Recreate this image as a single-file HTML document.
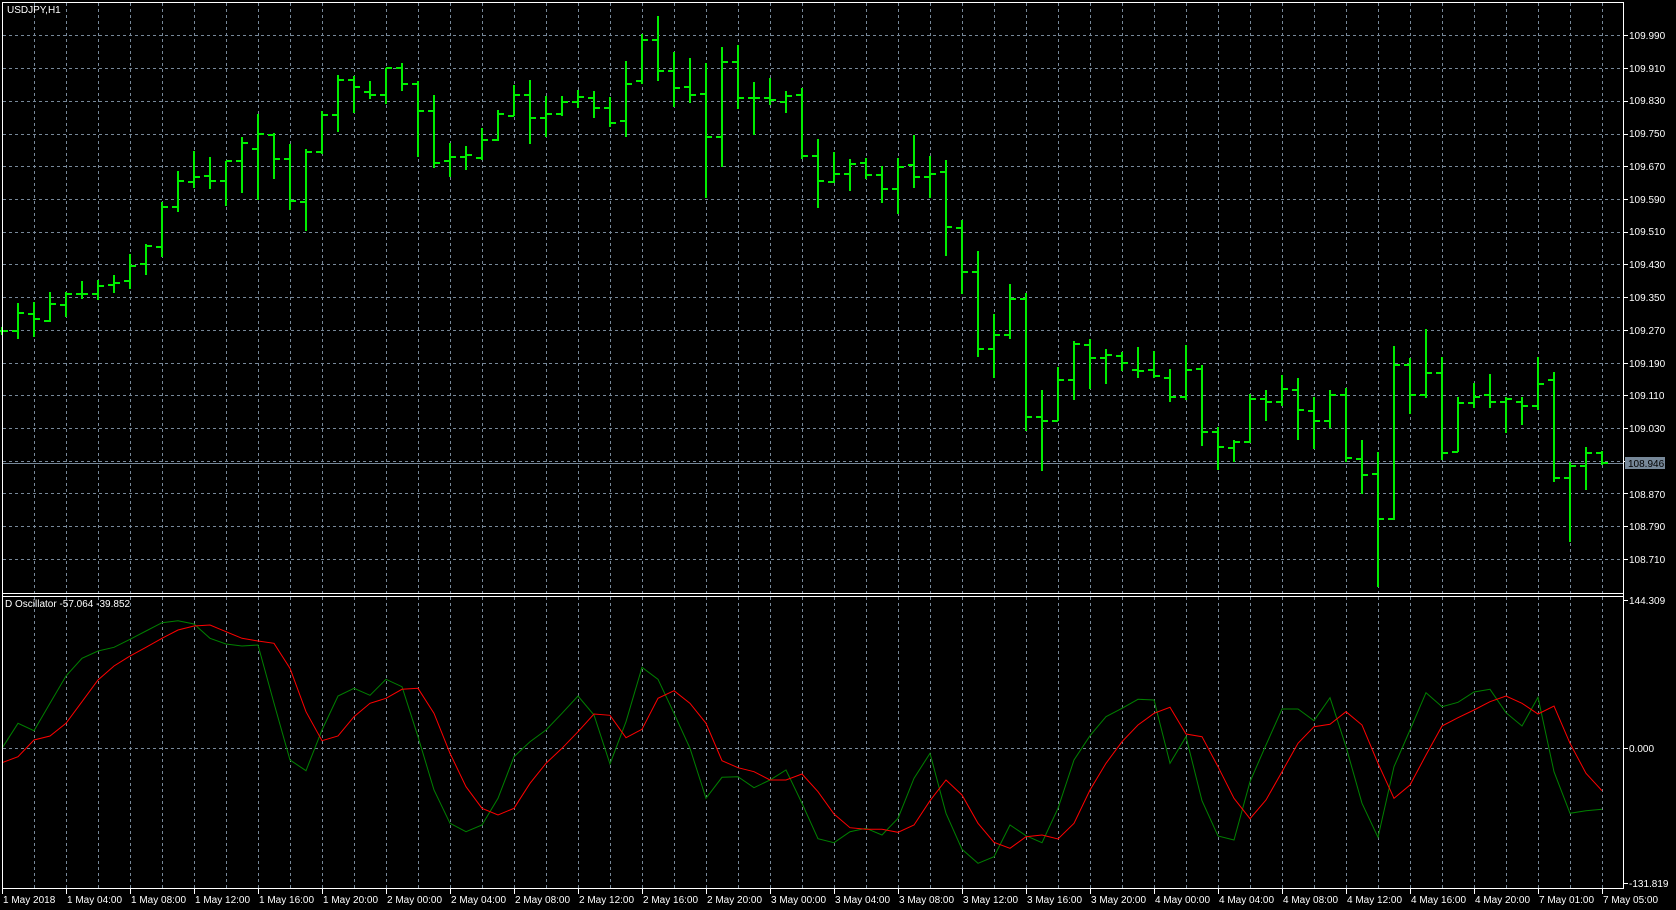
<!DOCTYPE html>
<html><head><meta charset="utf-8">
<style>
html,body{margin:0;padding:0;background:#000;width:1676px;height:910px;overflow:hidden}
svg{position:absolute;left:0;top:0}
text{font-family:"Liberation Sans",sans-serif;font-size:10px;fill:#fff}
</style></head><body>
<svg id="s" width="1676" height="910" viewBox="0 0 1676 910" shape-rendering="crispEdges">
<g id="grid" stroke="#778899" stroke-width="1" stroke-dasharray="3,3"></g>
<line x1="2" y1="463.5" x2="1624" y2="463.5" stroke="#778899" stroke-width="1"/>
<g id="bars" stroke="#00ee00" stroke-width="2"></g>
<g id="osc" fill="none" stroke-width="1" shape-rendering="auto"></g>
<g stroke="#fff" stroke-width="1" fill="none">
<line x1="2.5" y1="2.5" x2="1623.5" y2="2.5"/>
<line x1="2.5" y1="2" x2="2.5" y2="889"/>
<line x1="1623.5" y1="2" x2="1623.5" y2="889"/>
<line x1="2" y1="593.5" x2="1624" y2="593.5"/>
<line x1="2" y1="596.5" x2="1624" y2="596.5"/>
<line x1="2" y1="888.5" x2="1624" y2="888.5"/>
</g>
<g id="ticks" stroke="#fff" stroke-width="1"></g>
<text x="7" y="13">USDJPY,H1</text>
<text x="5" y="607">D Oscillator -57.064 -39.852</text>
<g id="ylab"><text x="1629" y="39">109.990</text><text x="1629" y="72">109.910</text><text x="1629" y="104">109.830</text><text x="1629" y="137">109.750</text><text x="1629" y="170">109.670</text><text x="1629" y="203">109.590</text><text x="1629" y="235">109.510</text><text x="1629" y="268">109.430</text><text x="1629" y="301">109.350</text><text x="1629" y="334">109.270</text><text x="1629" y="367">109.190</text><text x="1629" y="399">109.110</text><text x="1629" y="432">109.030</text><text x="1629" y="498">108.870</text><text x="1629" y="530">108.790</text><text x="1629" y="563">108.710</text><text x="1629" y="604">144.309</text><text x="1629" y="752">0.000</text><text x="1629" y="887">-131.819</text></g>
<rect x="1625" y="457" width="40" height="12" fill="#778899"/>
<text x="1628" y="467" style="fill:#000">108.946</text>
<g id="xlab"><text x="3" y="903">1 May 2018</text><text x="67" y="903">1 May 04:00</text><text x="131" y="903">1 May 08:00</text><text x="195" y="903">1 May 12:00</text><text x="259" y="903">1 May 16:00</text><text x="323" y="903">1 May 20:00</text><text x="387" y="903">2 May 00:00</text><text x="451" y="903">2 May 04:00</text><text x="515" y="903">2 May 08:00</text><text x="579" y="903">2 May 12:00</text><text x="643" y="903">2 May 16:00</text><text x="707" y="903">2 May 20:00</text><text x="771" y="903">3 May 00:00</text><text x="835" y="903">3 May 04:00</text><text x="899" y="903">3 May 08:00</text><text x="963" y="903">3 May 12:00</text><text x="1027" y="903">3 May 16:00</text><text x="1091" y="903">3 May 20:00</text><text x="1155" y="903">4 May 00:00</text><text x="1219" y="903">4 May 04:00</text><text x="1283" y="903">4 May 08:00</text><text x="1347" y="903">4 May 12:00</text><text x="1411" y="903">4 May 16:00</text><text x="1475" y="903">4 May 20:00</text><text x="1539" y="903">7 May 01:00</text><text x="1603" y="903">7 May 05:00</text></g>
</svg>
<script>
var NS="http://www.w3.org/2000/svg";
function el(p,t,a){var e=document.createElementNS(NS,t);for(var k in a)e.setAttribute(k,a[k]);p.appendChild(e);return e;}
var g=document.getElementById('grid');
for(var x=34;x<1624;x+=32){el(g,'line',{x1:x+.5,y1:3,x2:x+.5,y2:593});el(g,'line',{x1:x+.5,y1:597,x2:x+.5,y2:888});}
for(var k=0;k<17;k++){var y=Math.round(35.4+32.72*k)+.5;el(g,'line',{x1:3,y1:y,x2:1623,y2:y});}
el(g,'line',{x1:3,y1:748.5,x2:1623,y2:748.5});
var tk=document.getElementById('ticks');
for(var k=0;k<17;k++){var y=Math.round(35.4+32.72*k)+.5;el(tk,'line',{x1:1624,y1:y,x2:1628,y2:y});}
[600.5,748.5,883.5].forEach(function(y){el(tk,'line',{x1:1624,y1:y,x2:1628,y2:y});});
for(var k=0;k<26;k++){var x=2+64*k+.5;el(tk,'line',{x1:x,y1:889,x2:x,y2:894});}
// H L O C in zoom units (divide by 2.63)
var B=[[860,880,870,870],[798,892,870,824],[793,887,826,840],[767,848,845,800],[768,833,802,773],[738,787,773,773],[737,790,773,752],[722,771,750,743],[667,761,740,700],[641,724,694,648],[530,675,650,545],[451,558,545,477],[398,495,479,466],[413,497,462,477],[423,542,477,424],[361,508,424,376],[300,526,392,353],[349,471,354,418],[379,551,418,528],[393,607,532,400],[291,405,401,302],[198,347,302,210],[199,297,210,229],[213,260,241,250],[178,273,250,179],[166,239,179,220],
[212,413,220,292],[250,441,292,429],[377,465,424,412],[385,447,412,408],[337,421,416,368],[290,370,368,301],[224,306,304,249],[211,378,249,311],[253,360,311,300],[253,305,300,267],[237,284,267,255],[240,310,258,284],[256,333,284,324],[161,360,318,220],[89,222,212,106],[42,212,106,186],[137,281,186,231],[153,270,229,249],[165,521,246,360],[124,438,360,164],[119,286,164,258],[216,354,258,258],[206,276,258,263],[240,297,267,252],[232,418,249,410],
[366,547,410,477],[401,482,479,458],[419,502,458,432],[416,472,428,461],[437,534,461,497],[416,564,497,439],[356,494,434,466],[411,521,466,458],[422,674,453,598],[579,774,600,716],[659,940,716,918],[827,995,918,882],[748,892,882,787],[771,1133,787,1098],[1025,1240,1098,1106],[965,1107,1106,1000],[896,1053,1000,905],[891,1024,908,942],[917,1011,942,934],[927,977,937,956],[912,995,973,976],[922,993,973,990],[970,1057,993,1045],[907,1052,1045,973],[959,1172,971,1137],
[1123,1235,1137,1175],[1157,1216,1178,1163],[1037,1165,1163,1050],[1027,1108,1050,1058],[987,1067,1058,1024],[994,1157,1026,1077],[1045,1181,1080,1106],[1025,1125,1106,1038],[1021,1215,1038,1204],[1157,1298,1206,1248],[1189,1543,1246,1366],[909,1368,1366,961],[941,1090,961,1040],[864,1048,1040,980],[940,1210,980,1191],[1045,1190,1188,1061],[1007,1072,1061,1045],[983,1072,1038,1058],[1043,1140,1058,1050],[1045,1119,1058,1067],[940,1077,1067,1009],[978,1268,1000,1258],[1215,1425,1256,1226],[1175,1288,1226,1192],[1186,1223,1192,1219]];
var bg=document.getElementById('bars'),d='';
function Y(v){return Math.round(v/2.63);}
B.forEach(function(b,i){var x=2+16*i;var h=Y(b[0]),l=Y(b[1]),o=Y(b[2]),c=Y(b[3]);
if(l-h<2)l=h+2;
d+='M'+x+' '+h+'V'+l+'M'+(x-6)+' '+o+'H'+x+'M'+x+' '+c+'H'+(x+6);});
el(bg,'path',{d:d});
var G=[475,400,422,340,258,205,183,172,148,123,98,92,102,145,162,168,165,340,510,542,420,318,295,316,268,290,440,600,700,725,705,625,500,455,420,370,318,375,522,395,232,268,370,475,625,562,560,593,570,540,640,746,758,725,715,735,685,565,490,670,778,820,800,705,737,758,655,510,437,380,355,328,330,520,440,632,738,750,575,465,357,357,392,323,470,640,742,530,420,308,350,337,306,298,368,408,322,545,670,662,658];
var R=[518,500,450,438,400,335,270,228,198,172,145,120,108,105,125,145,153,160,235,365,452,438,380,340,325,298,295,370,490,590,655,675,655,580,520,475,425,372,376,443,418,325,302,340,400,512,533,545,570,570,552,605,672,713,718,718,727,705,632,570,615,700,757,775,740,735,747,700,600,520,455,405,370,352,432,440,530,625,686,630,545,460,410,403,365,405,520,625,585,495,408,383,360,335,318,340,372,348,460,550,602];
var og=document.getElementById('osc');
function P(a){return a.map(function(v,i){return (i?'L':'M')+(2+16*i)+' '+(590+v/3).toFixed(1);}).join('');}
el(og,'path',{d:P(G),stroke:'#008000'});
el(og,'path',{d:P(R),stroke:'#ff0000'});
</script>
</body></html>
